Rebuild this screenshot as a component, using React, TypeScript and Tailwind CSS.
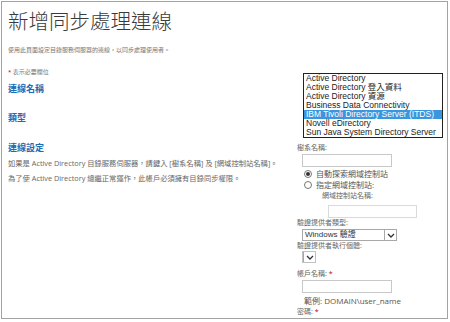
const cjk = "font-['Open_Sans','Noto_Sans_CJK_TC',sans-serif]";
const arial = "font-['Liberation_Sans','Noto_Sans_CJK_TC',sans-serif]";

const directories = [
  "Active Directory",
  "Active Directory 登入資料",
  "Active Directory 資源",
  "Business Data Connectivity",
  "IBM Tivoli Directory Server (ITDS)",
  "Novell eDirectory",
  "Sun Java System Directory Server",
];

function Label({ children, required }: { children: React.ReactNode; required?: boolean }) {
  return (
    <div className={`${cjk} text-[7px] leading-[10px] text-[#666]`}>
      {children}
      {required && <span className="text-[#c00000]"> *</span>}
    </div>
  );
}

function Arrow() {
  return (
    <span className="flex h-full w-[12px] items-center justify-center border-l border-[#a8a8a8] bg-white">
      <svg width="8" height="5" viewBox="0 0 8 5">
        <path d="M1 1 L4 4 L7 1" fill="none" stroke="#333" strokeWidth="1.3" />
      </svg>
    </span>
  );
}

function Radio({ checked, children }: { checked?: boolean; children: React.ReactNode }) {
  return (
    <div className="flex h-[10px] items-center gap-[4px] pl-[7px]">
      <span className="flex h-[8px] w-[8px] items-center justify-center rounded-full border border-[#777] bg-white">
        {checked && <span className="h-[4px] w-[4px] rounded-full bg-[#333]" />}
      </span>
      <span className={`${cjk} text-[8px] leading-[10px] text-[#555]`}>{children}</span>
    </div>
  );
}

export default function App() {
  return (
    <div className="relative h-[322px] w-[450px] bg-white">
      <div className="ml-px mt-px h-[318px] w-[447px] overflow-hidden border border-[#a3a3a3] pl-[6px]">
        <h1 className={`${cjk} mt-[8px] text-[20.5px] font-light leading-[22px] text-[#3a3a3a]`}>
          新增同步處理連線
        </h1>
        <p className={`${cjk} mt-[14px] text-[6px] leading-[8px] text-[#777]`}>
          使用此頁面設定目錄服務伺服器的連線，以同步處理使用者。
        </p>
        <p className={`${cjk} mt-[14px] text-[6px] leading-[8px] text-[#777]`}>
          <span className="text-[#c00000]">*</span> 表示必要欄位
        </p>

        <div className="mt-[8px] grid grid-cols-[290px_1fr]">
          <h2 className={`${cjk} text-[9px] font-bold leading-[10px] text-[#1a6cb5]`}>連線名稱</h2>
          <div />
          <h2 className={`${cjk} mt-[19px] text-[9px] font-bold leading-[10px] text-[#1a6cb5]`}>類型</h2>
          <div />
          <div className="mt-[20px]">
            <h2 className={`${cjk} text-[9px] font-bold leading-[10px] text-[#1a6cb5]`}>連線設定</h2>
            <p className={`${cjk} mt-[5px] whitespace-nowrap text-[7.3px] leading-[10px] text-[#666]`}>
              如果是 Active Directory 目錄服務伺服器，請鍵入 [樹系名稱] 及 [網域控制站名稱]。
            </p>
            <p className={`${cjk} mt-[5px] whitespace-nowrap text-[7.3px] leading-[10px] text-[#666]`}>
              為了使 Active Directory 總繼正常運作，此帳戶必須擁有目錄同步權限。
            </p>
          </div>
          <div className="mt-[20px] -ml-[1px]">
            <Label>樹系名稱:</Label>
            <div className="ml-[5px] mt-px h-[13px] w-[90px] border border-[#c8c8c8]" />
            <div className="mt-[2px]">
              <Radio checked>自動探索網域控制站</Radio>
            </div>
            <div className="mt-px">
              <Radio>指定網域控制站:</Radio>
            </div>
            <div className="mt-px pl-[25px]">
              <Label>網域控制站名稱:</Label>
            </div>
            <div className="ml-[31px] mt-[4px] h-[13px] w-[89px] border border-[#dadada]" />
            <Label>驗證提供者類型:</Label>
            <div className="ml-[5px] mt-px flex h-[12px] w-[95px] items-stretch border border-[#a8a8a8]">
              <span className={`${arial} flex-1 pl-[2px] text-[8px] leading-[10px] text-[#333]`}>Windows 驗證</span>
              <Arrow />
            </div>
            <Label>驗證提供者執行個體:</Label>
            <div className="ml-[5px] flex h-[12px] w-[14px] items-stretch border border-[#c0c0c0]">
              <Arrow />
            </div>
            <div className="mt-[6px]">
              <Label required>帳戶名稱:</Label>
            </div>
            <div className="ml-[5px] mt-px h-[13px] w-[90px] border border-[#c8c8c8]" />
            <div className={`${cjk} mt-[3px] pl-[7px] text-[8px] leading-[10px] text-[#555]`}>
              範例: DOMAIN\user_name
            </div>
            <div className="mt-px">
              <Label required>密碼:</Label>
            </div>
          </div>
        </div>
      </div>

      {/* open type dropdown */}
      <ul className={`${arial} absolute left-[303px] top-[72px] w-[140px] border border-[#222] bg-white`}>
        {directories.map((d, i) => (
          <li
            key={d}
            className={`h-[9px] whitespace-nowrap pl-[2px] text-[8.5px] leading-[9px] ${
              i === 4 ? "bg-[#3b96de] text-white" : "text-[#222]"
            }`}
          >
            {d}
          </li>
        ))}
      </ul>
    </div>
  );
}
